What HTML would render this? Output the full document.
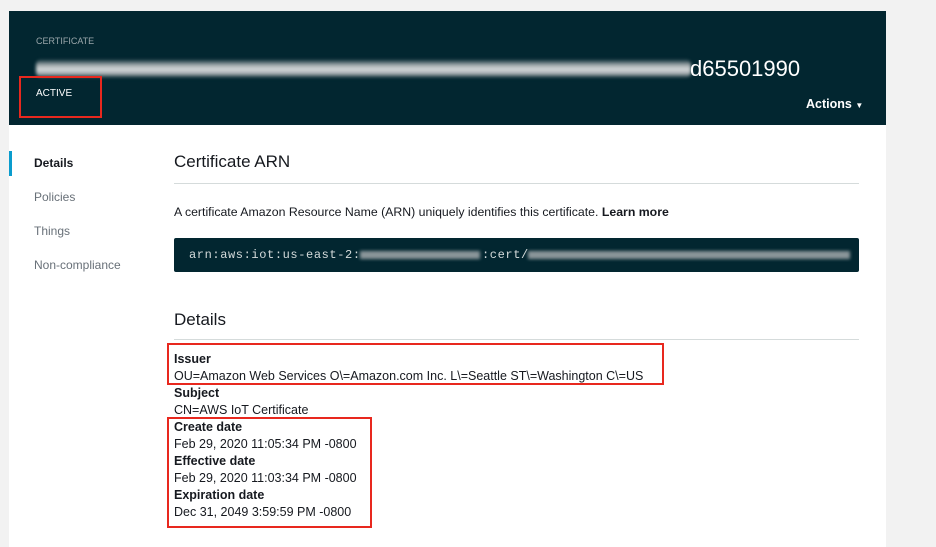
<!DOCTYPE html>
<html><head><style>
*{margin:0;padding:0;box-sizing:border-box}
body{width:936px;height:547px;background:#f2f2f2;font-family:"Liberation Sans",sans-serif;position:relative;overflow:hidden;color:#16191f}
.a{position:absolute;white-space:nowrap}
.card{position:absolute;left:9px;top:11px;width:877px;height:536px;background:#fff}
.hdr{position:absolute;left:9px;top:11px;width:877px;height:114px;background:#022630}
.blur{position:absolute;left:36px;top:59px;width:655px;height:19px;background:linear-gradient(180deg,#022630 0%,#9aa3a6 30%,#d8dcdd 55%,#9aa3a6 80%,#022630 100%);filter:blur(1.5px);border-radius:6px}
.red{position:absolute;border:2px solid #e8281e}
.nav{font-size:12px;color:#687078}
.lbl{font-size:12.5px;font-weight:bold;color:#16191f}
.val{font-size:12.5px;color:#16191f}
</style></head><body>
<div class="card"></div>
<div class="hdr"></div>
<div class="a" style="left:36px;top:36px;font-size:9px;color:#9ba7ab">CERTIFICATE</div>
<div class="blur"></div>
<div class="a" style="left:690px;top:56px;font-size:22px;color:#fff">d65501990</div>
<div class="a" style="left:36px;top:88px;font-size:10px;color:#fff">ACTIVE</div>
<div class="red" style="left:19px;top:76px;width:83px;height:42px"></div>
<div class="a" style="left:806px;top:97px;font-size:12.5px;font-weight:bold;color:#fff">Actions <span style="font-size:8px">&#9660;</span></div>

<div class="a" style="left:9px;top:151px;width:3px;height:25px;background:#0a9ccd"></div>
<div class="a nav" style="left:34px;top:156px;color:#16191f;font-weight:bold">Details</div>
<div class="a nav" style="left:34px;top:190px">Policies</div>
<div class="a nav" style="left:34px;top:224px">Things</div>
<div class="a nav" style="left:34px;top:258px">Non-compliance</div>

<div class="a" style="left:174px;top:152px;font-size:17px;color:#16191f">Certificate ARN</div>
<div class="a" style="left:174px;top:183px;width:685px;height:1px;background:#d5dbdb"></div>
<div class="a" style="left:174px;top:205px;font-size:12.3px">A certificate Amazon Resource Name (ARN) uniquely identifies this certificate. <b>Learn more</b></div>
<div class="a" style="left:174px;top:238px;width:685px;height:34px;background:#022630;border-radius:2px"></div>
<div class="a" style="left:189px;top:248px;font-family:'Liberation Mono',monospace;font-size:12px;color:#d5dbdb;letter-spacing:0.6px">arn:aws:iot:us-east-2:</div>
<div class="a" style="left:360px;top:251px;width:120px;height:8px;background:#8a9599;filter:blur(1.5px)"></div>
<div class="a" style="left:482px;top:248px;font-family:'Liberation Mono',monospace;font-size:12px;color:#d5dbdb;letter-spacing:0.6px">:cert/</div>
<div class="a" style="left:528px;top:251px;width:322px;height:8px;background:#8a9599;filter:blur(1.5px)"></div>

<div class="a" style="left:174px;top:310px;font-size:17px">Details</div>
<div class="a" style="left:174px;top:339px;width:685px;height:1px;background:#d5dbdb"></div>

<div class="a lbl" style="left:174px;top:352px">Issuer</div>
<div class="a val" style="left:174px;top:369px">OU=Amazon Web Services O\=Amazon.com Inc. L\=Seattle ST\=Washington C\=US</div>
<div class="a lbl" style="left:174px;top:386px">Subject</div>
<div class="a val" style="left:174px;top:403px">CN=AWS IoT Certificate</div>
<div class="a lbl" style="left:174px;top:420px">Create date</div>
<div class="a val" style="left:174px;top:437px">Feb 29, 2020 11:05:34 PM -0800</div>
<div class="a lbl" style="left:174px;top:454px">Effective date</div>
<div class="a val" style="left:174px;top:471px">Feb 29, 2020 11:03:34 PM -0800</div>
<div class="a lbl" style="left:174px;top:488px">Expiration date</div>
<div class="a val" style="left:174px;top:505px">Dec 31, 2049 3:59:59 PM -0800</div>

<div class="red" style="left:167px;top:343px;width:497px;height:42px"></div>
<div class="red" style="left:167px;top:417px;width:205px;height:111px"></div>
</body></html>
